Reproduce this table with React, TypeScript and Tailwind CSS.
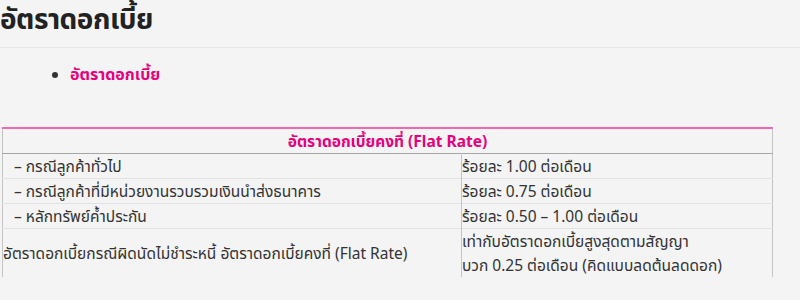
export default function App() {
  const rows: { label: string; value: string[]; indent: boolean }[] = [
    { label: "– กรณีลูกค้าทั่วไป", value: ["ร้อยละ 1.00 ต่อเดือน"], indent: true },
    { label: "– กรณีลูกค้าที่มีหน่วยงานรวบรวมเงินนำส่งธนาคาร", value: ["ร้อยละ 0.75 ต่อเดือน"], indent: true },
    { label: "– หลักทรัพย์ค้ำประกัน", value: ["ร้อยละ 0.50 – 1.00 ต่อเดือน"], indent: true },
    {
      label: "อัตราดอกเบี้ยกรณีผิดนัดไม่ชำระหนี้ อัตราดอกเบี้ยคงที่ (Flat Rate)",
      value: ["เท่ากับอัตราดอกเบี้ยสูงสุดตามสัญญา", "บวก 0.25 ต่อเดือน (คิดแบบลดต้นลดดอก)"],
      indent: false,
    },
  ];

  return (
    <div
      className="w-[800px] h-[300px] overflow-hidden bg-[#f4f4f4] text-[#333]"
      style={{ fontFamily: '"Noto Sans", "Noto Sans Thai", sans-serif' }}
    >
      <h1 className="text-[28px] font-bold leading-[36px] text-[#222] tracking-[-0.5px]">
        อัตราดอกเบี้ย
      </h1>
      <div className="mt-[11px] h-px bg-[#e6e6e6]" />
      <ul className="list-disc pl-[70px] pt-[14px] text-[16px] font-bold leading-[24px] marker:text-[#333]">
        <li className="text-[#e6007e]">อัตราดอกเบี้ย</li>
      </ul>
      <div className="mt-[41px] w-[773px] pl-[2px]">
        <table className="w-full border-collapse border-l border-r border-[#c4c4c4] text-[15.5px] leading-[24px]">
          <thead>
            <tr className="h-[25px] border-t-[2px] border-t-[#f06aae] border-b border-b-[#a6a6a6]">
              <th colSpan={2} className="text-center font-bold text-[#e6007e]">
                อัตราดอกเบี้ยคงที่ (Flat Rate)
              </th>
            </tr>
          </thead>
          <tbody>
            {rows.map((r, i) => (
              <tr key={i} className={i < rows.length - 1 ? "h-[25px] border-b border-[#e2e2e2]" : ""}>
                <td className={`w-[459px] align-middle ${r.indent ? "pl-[11px]" : "pl-0"}`}>
                  {r.label}
                </td>
                <td className="border-l border-[#c4c4c4] align-top">
                  {r.value.map((v, j) => (
                    <div key={j}>{v}</div>
                  ))}
                </td>
              </tr>
            ))}
          </tbody>
        </table>
      </div>
    </div>
  );
}
